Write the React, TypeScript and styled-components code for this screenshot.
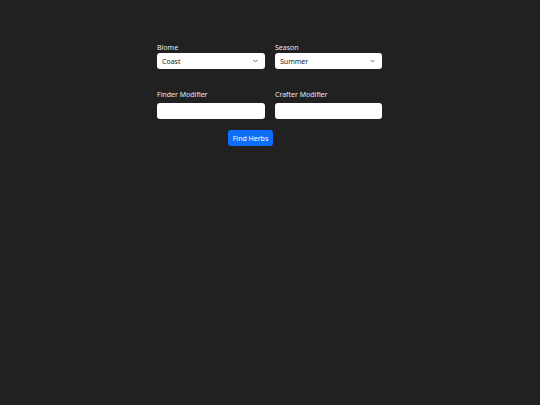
import React from "react";
import styled, { createGlobalStyle } from "styled-components";

const Global = createGlobalStyle`
  html, body {
    margin: 0;
    padding: 0;
    background: #212121;
  }
  body {
    font-family: "Noto Sans", "Open Sans", sans-serif;
    color: #e6e6e6;
  }
`;

const Page = styled.div`
  width: 540px;
  height: 405px;
  background: #212121;
  padding-top: 43px;
  box-sizing: border-box;
`;

const Form = styled.form`
  width: 225px;
  margin-left: 157px;
  display: flex;
  flex-direction: column;
`;

const Row = styled.div<{ $gap: number }>`
  display: grid;
  grid-template-columns: 108px 107px;
  column-gap: 10px;
  margin-bottom: ${(p) => p.$gap}px;
`;

const Field = styled.div`
  display: flex;
  flex-direction: column;
`;

const Label = styled.label<{ $h: number }>`
  font-size: 7px;
  line-height: 9px;
  height: ${(p) => p.$h}px;
  color: #e8e8e8;
`;

const Select = styled.div`
  position: relative;
  height: 16px;
  background: #fff;
  border-radius: 3px;
  box-sizing: border-box;
  padding-left: 5px;
  display: flex;
  align-items: center;
  font-size: 7px;
  color: #222;
`;

const Chevron = styled.svg`
  position: absolute;
  right: 7px;
  top: 6px;
`;

const Input = styled.div`
  height: 16px;
  background: #fff;
  border-radius: 3px;
`;

const Button = styled.button`
  margin-left: 71px;
  width: 45px;
  height: 16px;
  border: none;
  border-radius: 3px;
  background: #0d6efd;
  color: #fff;
  font-family: "Noto Sans", "Open Sans", sans-serif;
  font-size: 7px;
  padding: 0;
  cursor: pointer;
`;

function Caret() {
  return (
    <Chevron width="5" height="4" viewBox="0 0 10 6">
      <path d="M1 1l4 4 4-4" fill="none" stroke="#444" strokeWidth="1.5" strokeLinecap="round" strokeLinejoin="round" />
    </Chevron>
  );
}

export default function App() {
  return (
    <Page>
      <Global />
      <Form onSubmit={(e) => e.preventDefault()}>
        <Row $gap={21}>
          <Field>
            <Label $h={10}>Biome</Label>
            <Select>
              Coast
              <Caret />
            </Select>
          </Field>
          <Field>
            <Label $h={10}>Season</Label>
            <Select>
              Summer
              <Caret />
            </Select>
          </Field>
        </Row>
        <Row $gap={11}>
          <Field>
            <Label $h={13}>Finder Modifier</Label>
            <Input />
          </Field>
          <Field>
            <Label $h={13}>Crafter Modifier</Label>
            <Input />
          </Field>
        </Row>
        <Button type="submit">Find Herbs</Button>
      </Form>
    </Page>
  );
}
